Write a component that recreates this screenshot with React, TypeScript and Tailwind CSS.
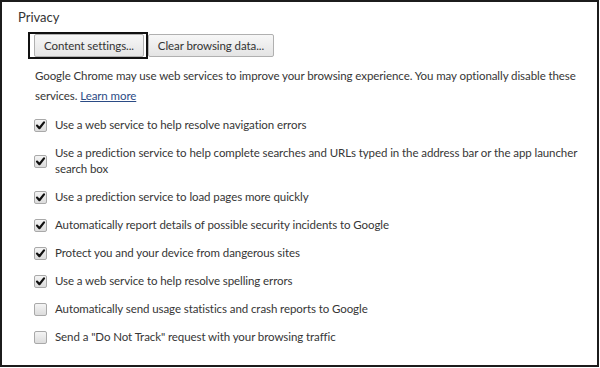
const items: { label: React.ReactNode; checked: boolean }[] = [
  { label: 'Use a web service to help resolve navigation errors', checked: true },
  {
    label: (
      <>
        Use a prediction service to help complete searches and URLs typed in the address bar or the app launcher
        <br />
        search box
      </>
    ),
    checked: true,
  },
  { label: 'Use a prediction service to load pages more quickly', checked: true },
  { label: 'Automatically report details of possible security incidents to Google', checked: true },
  { label: 'Protect you and your device from dangerous sites', checked: true },
  { label: 'Use a web service to help resolve spelling errors', checked: true },
  { label: 'Automatically send usage statistics and crash reports to Google', checked: false },
  { label: 'Send a "Do Not Track" request with your browsing traffic', checked: false },
];

function Checkbox({ checked }: { checked: boolean }) {
  return (
    <span className="flex h-[13px] w-[13px] shrink-0 items-center justify-center rounded-[2px] border border-[#a9a9a9] bg-gradient-to-b from-[#f4f4f4] to-[#dcdcdc]">
      {checked && (
        <svg width="11" height="11" viewBox="0 0 11 11">
          <path d="M2 5.6 L4.4 8.2 L9 2.4" fill="none" stroke="#111" strokeWidth="2.2" strokeLinecap="round" strokeLinejoin="round" />
        </svg>
      )}
    </span>
  );
}

export default function App() {
  return (
    <div className="h-[368px] w-[600px] overflow-hidden bg-white">
      <div className="h-[367px] w-[599px] whitespace-nowrap border-2 border-[#1c1c1c] bg-white pl-[16px] pt-[6px] font-['Lato',sans-serif] text-[#363636]">
        <h3 className="text-[13px] leading-[18px] text-[#333]">Privacy</h3>

        <div className="mt-[6px] ml-[10px] flex items-start">
          <div className="flex h-[27px] w-[120px] border-2 border-[#111] pl-[4px] pt-0">
            <button className="h-[23px] w-[110px] rounded-[2px] border border-[#b0b0b0] bg-gradient-to-b from-[#f7f7f7] to-[#e4e4e4] text-[11.5px] tracking-[-0.08px] text-[#333]">
              Content settings...
            </button>
          </div>
          <button className="mt-[2px] h-[23px] w-[126px] rounded-[2px] border border-[#b0b0b0] bg-gradient-to-b from-[#f7f7f7] to-[#e4e4e4] text-[11.5px] tracking-[-0.08px] text-[#333]">
            Clear browsing data...
          </button>
        </div>

        <p className="mt-[7px] ml-[17px] text-[11.5px] leading-[20px] tracking-[-0.08px]">
          Google Chrome may use web services to improve your browsing experience. You may optionally disable these
          <br />
          services. <a className="text-[#2b4b85] underline">Learn more</a>
        </p>

        <div className="mt-[5px] ml-[16px] flex flex-col">
          {items.map((it, i) => (
            <label key={i} className="flex items-center gap-[8px] py-[6px] text-[11.5px] leading-[16px] tracking-[-0.08px]">
              <Checkbox checked={it.checked} />
              <span>{it.label}</span>
            </label>
          ))}
        </div>
      </div>
    </div>
  );
}
